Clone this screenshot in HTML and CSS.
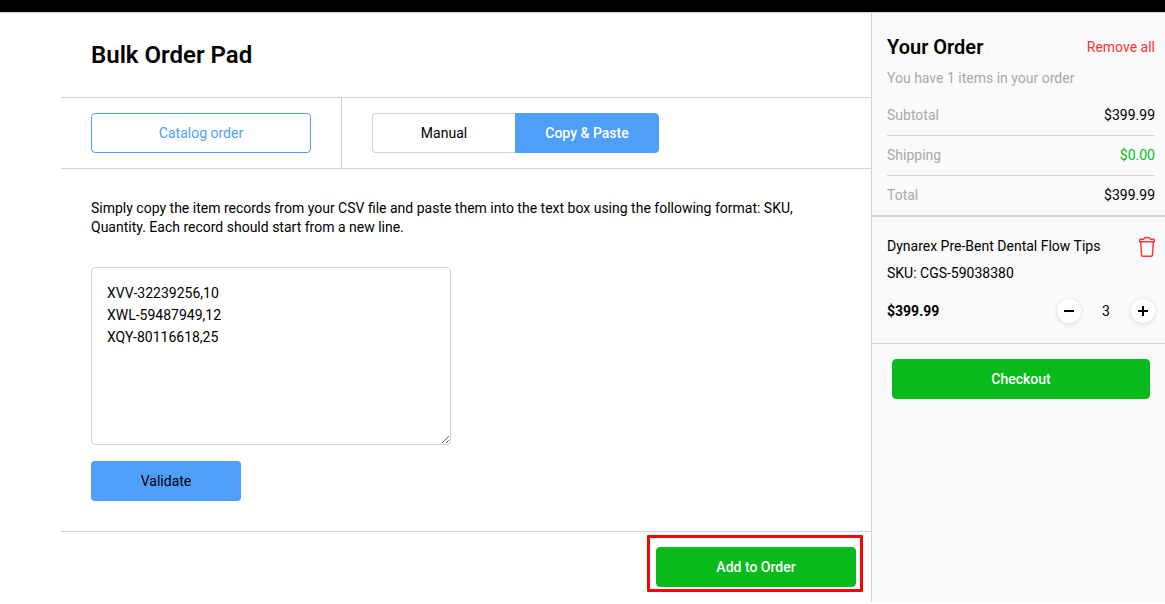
FILE: index.html
```
<!DOCTYPE html>
<html lang="en">
<head>
<meta charset="utf-8">
<meta name="viewport" content="width=device-width, initial-scale=1">
<title>Bulk Order Pad</title>
<link rel="stylesheet" href="styles.css">
</head>
<body>
<div class="page">
  <header class="topbar"></header>
  <div class="layout">
    <main class="main">
      <div class="main-header"><h1 class="page-title">Bulk Order Pad</h1></div>
      <div class="toolbar">
        <div class="toolbar-catalog">
          <button class="btn btn-outline" type="button">Catalog order</button>
        </div>
        <div class="toolbar-modes">
          <button class="btn mode mode-manual" type="button">Manual</button>
          <button class="btn mode mode-active" type="button" aria-pressed="true">Copy &amp; Paste</button>
        </div>
      </div>
      <form class="paste-form">
        <label class="hint" for="records">Simply copy the item records from your CSV file and paste them into the text box using the following format: SKU, Quantity. Each record should start from a new line.</label>
        <textarea class="records" id="records" spellcheck="false">XVV-32239256,10
XWL-59487949,12
XQY-80116618,25</textarea>
        <button class="btn btn-validate" type="button">Validate</button>
      </form>
      <div class="main-footer">
        <div class="highlight">
          <button class="btn btn-green btn-add" type="button">Add to Order</button>
        </div>
      </div>
    </main>
    <aside class="order">
      <section class="summary">
        <div class="order-header">
          <h2 class="order-title">Your Order</h2>
          <button class="remove-all" type="button">Remove all</button>
        </div>
        <p class="order-count">You have 1 items in your order</p>
        <dl class="totals">
          <div class="total-row"><dt>Subtotal</dt><dd>$399.99</dd></div>
          <div class="total-row"><dt>Shipping</dt><dd class="free">$0.00</dd></div>
          <div class="total-row"><dt>Total</dt><dd>$399.99</dd></div>
        </dl>
      </section>
      <section class="item">
        <div class="item-top">
          <div class="item-info">
            <p class="item-line">Dynarex Pre-Bent Dental Flow Tips</p>
            <p class="item-line">SKU: CGS-59038380</p>
          </div>
          <button class="trash" type="button" aria-label="Remove item">
            <svg width="16" height="20" viewBox="0 0 16 20" fill="none" stroke="#ff3236" stroke-width="1.4" stroke-linejoin="round">
              <path d="M.7 4.7V3Q.7 2.2 1.5 2.2H4.7L5.6 .8H10.4L11.3 2.2H14.5Q15.3 2.2 15.3 3V4.7Z"/>
              <path d="M1.7 4.9L2.6 18.4Q2.7 19.2 3.5 19.2H12.5Q13.3 19.2 13.4 18.4L14.3 4.9"/>
            </svg>
          </button>
        </div>
        <div class="item-bottom">
          <strong class="price">$399.99</strong>
          <div class="stepper">
            <button class="round" type="button" aria-label="Decrease quantity">
              <svg width="10" height="10" viewBox="0 0 10 10"><path d="M0 4H10V6H0Z"/></svg>
            </button>
            <span class="quantity">3</span>
            <button class="round" type="button" aria-label="Increase quantity">
              <svg width="10" height="10" viewBox="0 0 10 10"><path d="M0 4H4V0H6V4H10V6H6V10H4V6H0Z"/></svg>
            </button>
          </div>
        </div>
      </section>
      <div class="checkout">
        <button class="btn btn-green" type="button">Checkout</button>
      </div>
    </aside>
  </div>
</div>
</body>
</html>
```

FILE: styles.css
```
* {
  box-sizing: border-box;
}

body {
  margin: 0;
  background: #fff;
  color: #000;
  font: 14px/20px Roboto, "Liberation Sans", sans-serif;
}

h1, h2, p, dl, dd {
  margin: 0;
}

button {
  font: inherit;
  color: inherit;
  cursor: pointer;
}

.page {
  display: flex;
  flex-direction: column;
  min-height: calc(100vh - 2px);
}

.topbar {
  height: 13px;
  background: #000;
  border-bottom: 1px solid #d3d3d3;
}

.layout {
  flex: 1;
  display: grid;
  grid-template-columns: minmax(0, 1fr) 294px;
  padding-left: 61px;
}

/* Buttons */
.btn {
  display: block;
  width: 100%;
  height: 40px;
  padding: 0 16px;
  border: 1px solid transparent;
  border-radius: 4px;
  background: #fff;
  text-align: center;
}

.btn-outline {
  border-color: #4d9ff9;
  color: #4d9ff9;
}

.btn-green {
  background: #09ba1b;
  border-color: #09ba1b;
  color: #fff;
  font-weight: 500;
}

/* Main column */
.main-header {
  padding: 26px 30px;
  border-bottom: 1px solid #d3d3d3;
}

.page-title {
  font-size: 24px;
  line-height: 32px;
  font-weight: 600;
}

.toolbar {
  display: flex;
  border-bottom: 1px solid #d3d3d3;
}

.toolbar-catalog {
  width: 281px;
  padding: 15px 30px;
  border-right: 1px solid #d3d3d3;
}

.toolbar-modes {
  display: flex;
  padding: 15px 30px;
}

.mode {
  width: 144px;
}

.mode-manual {
  width: 143px;
  border-color: #d3d3d3;
  border-right: 0;
  border-radius: 4px 0 0 4px;
}

.mode-active {
  border-radius: 0 4px 4px 0;
  border-color: #4d9ff9;
  background: #4d9ff9;
  color: #fff;
  font-weight: 500;
}

.paste-form {
  display: flex;
  flex-direction: column;
  align-items: flex-start;
  padding: 30px;
  border-bottom: 1px solid #d3d3d3;
}

.hint {
  line-height: 19px;
  margin-bottom: 30px;
}

.records {
  width: 360px;
  max-width: 100%;
  height: 178px;
  padding: 14px 15px;
  border: 1px solid #d3d3d3;
  border-radius: 4px;
  font: inherit;
  line-height: 22px;
  color: #000;
}

.btn-validate {
  width: 150px;
  margin-top: 16px;
  background: #4d9ff9;
}

.main-footer {
  display: flex;
  justify-content: flex-end;
  padding: 15px;
}

.highlight {
  position: relative;
}

.highlight::after {
  content: "";
  position: absolute;
  inset: -12px -7px -5px -9px;
  border: 3px solid #f00;
  border-radius: 1px;
  pointer-events: none;
}

.btn-add {
  width: 200px;
}

/* Order column */
.order {
  background: #fafafa;
  border-left: 1px solid #d3d3d3;
}

.summary {
  padding: 22px 10px 0 15px;
  border-bottom: 2px solid #d3d3d3;
}

.order-header {
  display: flex;
  align-items: center;
  justify-content: space-between;
}

.order-title {
  font-size: 20px;
  line-height: 24px;
  font-weight: 600;
}

.remove-all {
  padding: 0;
  border: 0;
  background: none;
  color: #ff3236;
}

.order-count {
  margin: 9px 0 8px;
  color: #a9a9a9;
}

.total-row {
  display: flex;
  justify-content: space-between;
  padding: 9px 0 10px;
  border-bottom: 1px solid #d3d3d3;
}

.total-row:last-child {
  border-bottom: 0;
}

.total-row dt {
  color: #a9a9a9;
}

.free {
  color: #09ba1b;
}

.item {
  padding: 19px 10px 20px 15px;
  border-bottom: 1px solid #d3d3d3;
}

.item-top,
.item-bottom,
.stepper {
  display: flex;
  justify-content: space-between;
}

.item-info {
  display: grid;
  gap: 7px;
}

.trash {
  align-self: flex-start;
  display: flex;
  padding: 1px 0 0;
  border: 0;
  background: none;
}

.item-bottom {
  align-items: center;
  margin-top: 16px;
}

.price {
  font-weight: 700;
}

.stepper {
  align-items: center;
  width: 98px;
}

.round {
  display: flex;
  align-items: center;
  justify-content: center;
  width: 24px;
  height: 24px;
  padding: 0;
  border: 0;
  border-radius: 50%;
  background: #fff;
  box-shadow: 0 1px 5px rgba(0, 0, 0, 0.14);
}

.checkout {
  padding: 15px 15px 15px 20px;
}
```
